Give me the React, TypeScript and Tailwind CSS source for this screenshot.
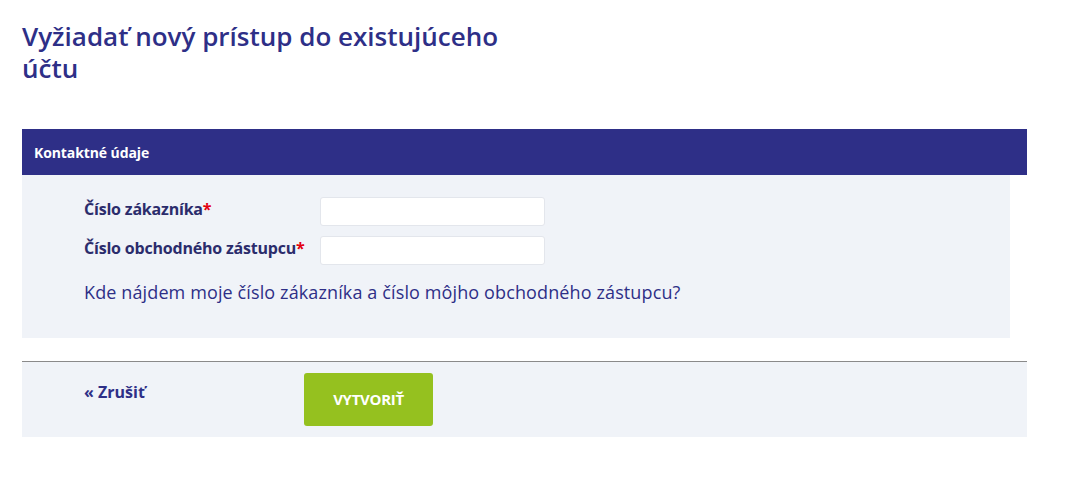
import React from "react";

const font = { fontFamily: '"Open Sans", "Liberation Sans", sans-serif' };

function Field({ label }: { label: string }) {
  return (
    <div className="flex items-center">
      <label className="mb-[6px] w-[236px] text-[16px] font-bold leading-[20px] tracking-[-0.2px] text-[#2b2c6c]">
        {label}
        <span className="text-[#e3000f]">*</span>
      </label>
      <input
        type="text"
        className="h-[29px] w-[225px] rounded-[3px] border border-[#e3e6ec] bg-white px-2 text-[14px] outline-none"
      />
    </div>
  );
}

export default function App() {
  return (
    <div className="min-h-[484px] bg-white pt-[20px]" style={font}>
      <h1 className="ml-[22px] w-[520px] text-[26px] font-semibold leading-[32px] text-[#2e2f87]">
        Vyžiadať nový prístup do existujúceho účtu
      </h1>

      <div className="mt-[45px] w-[1005px] pl-[22px] box-content">
        <div className="flex h-[46px] items-center bg-[#2e2f87] px-[12px] text-[14px] font-bold tracking-[-0.1px] text-white">
          Kontaktné údaje
        </div>
        <div className="mr-[17px] flex flex-col gap-[10px] bg-[#f0f3f8] pb-[33px] pl-[62px] pt-[22px]">
          <Field label="Číslo zákazníka" />
          <Field label="Číslo obchodného zástupcu" />
          <a href="#" className="mt-[4px] text-[18px] leading-[26px] tracking-[0.12px] text-[#2e2f87]">
            Kde nájdem moje číslo zákazníka a číslo môjho obchodného zástupcu?
          </a>
        </div>

        <div className="mt-[23px] flex items-start border-t border-[#8a8a8a] bg-[#f0f3f8] pb-[11px] pl-[62px] pt-[11px]">
          <a href="#" className="mt-[7px] w-[220px] text-[16px] font-bold text-[#2e2f87]">
            « Zrušiť
          </a>
          <button className="h-[53px] w-[129px] rounded-[3px] bg-[#95c11f] text-[15px] font-bold tracking-[-0.3px] text-white">
            VYTVORIŤ
          </button>
        </div>
      </div>
    </div>
  );
}
